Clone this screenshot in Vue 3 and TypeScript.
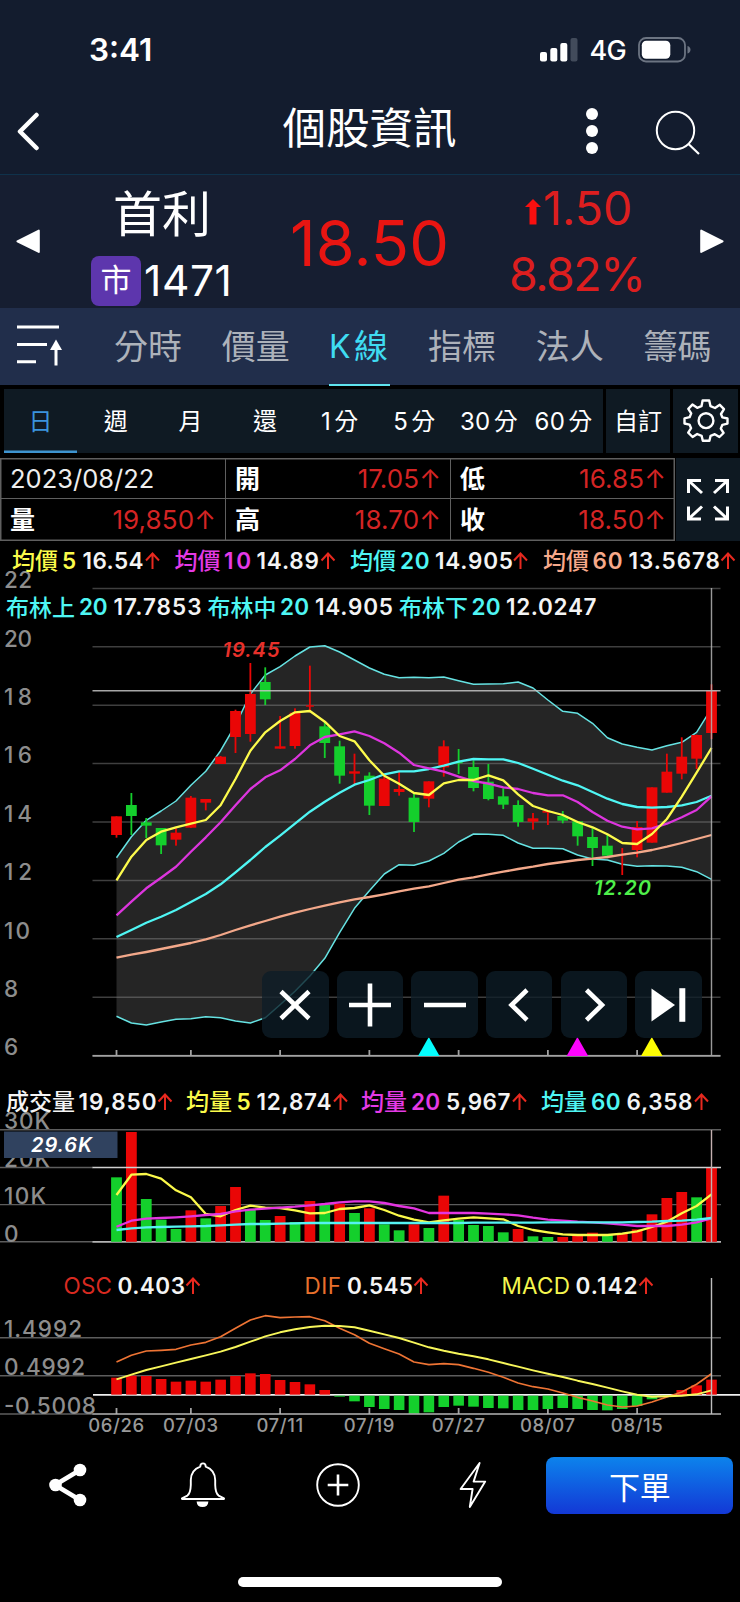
<script setup lang="ts">
type Tone = 'r' | 'g'
type Candle = [number, number, number, number, Tone]

interface Label {
  x: number
  y: number
  text: string
  w: number
  fill: string
  cjk?: boolean
}

const X0 = 116.5
const STEP = 14.875
const RED = '#ea0606'
const GREEN = '#14cf2c'
const cx = (i: number): number => X0 + i * STEP
const tone = (t: Tone): string => (t === 'r' ? RED : GREEN)

const line = (values: number[], top: number): string =>
  values.map((v, i) => `${cx(i).toFixed(1)},${(top + v / 3).toFixed(1)}`).join(' ')

const P = 630
const V = 1080
const M = 1260

// high, body top, body bottom, low (thirds of a pixel below P)
const candles: Candle[] = [
  [559, 559, 615, 623, 'r'], [489, 525, 558, 615, 'g'], [564, 577, 587, 624, 'g'], [594, 594, 646, 672, 'g'],
  [595, 608, 629, 647, 'r'], [498, 503, 593, 594, 'r'], [507, 507, 518, 541, 'r'], [378, 380, 402, 402, 'r'],
  [239, 243, 321, 369, 'r'], [99, 192, 312, 335, 'r'], [112, 156, 208, 225, 'g'], [258, 349, 356, 356, 'r'],
  [235, 248, 348, 356, 'r'], [107, 226, 230, 247, 'r'], [275, 289, 339, 384, 'g'], [332, 349, 437, 461, 'g'],
  [371, 424, 431, 464, 'r'], [427, 437, 527, 555, 'g'], [440, 446, 528, 528, 'r'], [426, 477, 486, 497, 'r'],
  [490, 503, 576, 606, 'g'], [454, 454, 506, 532, 'r'], [331, 349, 412, 440, 'r'], [357, 396, 400, 432, 'g'],
  [391, 411, 474, 484, 'g'], [402, 455, 507, 511, 'g'], [475, 499, 524, 537, 'g'], [511, 525, 576, 590, 'g'],
  [549, 565, 575, 599, 'r'], [541, 543, 548, 585, 'r'], [543, 558, 572, 580, 'g'], [573, 574, 619, 647, 'g'],
  [595, 621, 654, 708, 'g'], [615, 647, 677, 685, 'g'], [654, 672, 676, 735, 'r'], [573, 591, 660, 682, 'r'],
  [472, 472, 638, 638, 'r'], [371, 425, 488, 488, 'r'], [322, 380, 431, 448, 'r'], [314, 315, 386, 417, 'r'],
  [163, 182, 309, 327, 'r'],
]

const upper = [683, 620, 571, 543, 513, 466, 424, 362, 285, 192, 135, 110, 78, 51, 47, 66, 90, 114, 133, 143, 142, 143, 141, 152, 163, 162, 161, 156, 174, 210, 244, 250, 280, 323, 342, 352, 360, 347, 337, 307, 235]
const lower = [1159, 1179, 1185, 1176, 1168, 1166, 1160, 1163, 1173, 1179, 1163, 1124, 1084, 1038, 985, 908, 835, 782, 732, 704, 706, 693, 670, 636, 612, 613, 616, 639, 655, 655, 656, 675, 687, 690, 703, 709, 707, 708, 712, 725, 748]
const ma5 = [751, 680, 630, 605, 592, 581, 570, 526, 447, 362, 307, 273, 247, 243, 275, 318, 334, 391, 437, 461, 489, 495, 460, 450, 450, 436, 451, 493, 528, 543, 555, 576, 592, 613, 639, 642, 612, 567, 500, 428, 354]
const ma10 = [856, 815, 775, 743, 710, 665, 622, 577, 526, 477, 442, 421, 387, 346, 321, 313, 304, 318, 340, 368, 405, 415, 425, 440, 453, 461, 472, 477, 489, 496, 496, 516, 546, 572, 590, 598, 595, 581, 562, 540, 499]
const ma20 = [921, 900, 878, 860, 840, 816, 792, 763, 727, 690, 651, 617, 581, 545, 515, 488, 464, 450, 433, 424, 424, 417, 407, 395, 387, 388, 388, 399, 416, 434, 452, 466, 486, 506, 522, 531, 533, 531, 526, 516, 497]
const ma60 = [983, 974, 966, 957, 948, 939, 928, 915, 900, 886, 873, 860, 848, 837, 827, 817, 808, 801, 793, 784, 776, 769, 759, 749, 742, 733, 725, 717, 710, 702, 696, 690, 686, 681, 674, 668, 660, 650, 639, 627, 615]

const bandArea = `${line(upper, P)} ${line(lower, P).split(' ').reverse().join(' ')}`

const volTops = [292, 156, 357, 419, 447, 391, 415, 378, 321, 388, 420, 408, 426, 363, 375, 371, 399, 385, 433, 451, 433, 444, 347, 420, 435, 438, 457, 447, 469, 471, 471, 464, 458, 463, 462, 448, 403, 354, 336, 352, 263]
const volTones = [...'grgggrgrrggrgrgrgrggrgrggggrggrrrgrrrrrgr'] as Tone[]
const vma5 = [345, 284, 282, 296, 331, 352, 402, 409, 390, 377, 383, 384, 391, 400, 399, 387, 384, 376, 390, 407, 419, 427, 421, 416, 412, 415, 418, 438, 450, 457, 463, 465, 465, 465, 461, 454, 441, 425, 400, 378, 343]
const vma20 = [440, 422, 416, 414, 412, 409, 405, 402, 394, 389, 386, 383, 380, 376, 372, 367, 364, 364, 369, 378, 385, 399, 399, 399, 399, 401, 403, 406, 413, 419, 422, 425, 427, 430, 434, 438, 438, 438, 434, 427, 415]
const vma60 = [450, 445, 442, 441, 440, 439, 438, 436, 434, 432, 432, 431, 430, 429, 429, 429, 429, 429, 429, 429, 429, 429, 429, 429, 428, 428, 428, 428, 428, 427, 427, 427, 427, 427, 427, 426, 425, 423, 422, 419, 414]

const OSC_ZERO = 404
const osc = [353, 347, 348, 357, 365, 362, 365, 359, 348, 340, 342, 360, 366, 373, 390, 410, 424, 441, 447, 450, 461, 457, 441, 437, 440, 444, 445, 450, 450, 447, 444, 447, 450, 451, 447, 438, 418, 409, 390, 376, 359]
const dif = [306, 286, 273, 271, 268, 255, 247, 230, 205, 180, 167, 173, 171, 170, 182, 205, 224, 250, 266, 282, 306, 314, 311, 314, 325, 337, 352, 369, 380, 387, 399, 412, 423, 435, 441, 438, 426, 411, 396, 373, 341]
const macd = [358, 344, 330, 319, 308, 297, 286, 275, 261, 245, 229, 217, 208, 201, 197, 198, 202, 212, 223, 234, 248, 262, 272, 281, 289, 298, 309, 320, 331, 341, 351, 362, 372, 383, 394, 404, 410, 409, 407, 403, 391]

const ticks = [0, 5, 11, 17, 23, 29, 35]
const dates = ['06/26', '07/03', '07/11', '07/19', '07/27', '08/07', '08/15']
const priceAxis = [22, 20, 18, 16, 14, 12, 10, 8, 6].map((v) => ({ v, y: 1055.6 - (v - 6) * 29.2 }))

const W = '#f4f4f4'
const Y = '#fbfb4a'
const MG = '#e53ae6'
const CY = '#4ff6f4'
const OR = '#f7a98a'
const UP = '#e8291f'

const legends: Label[] = [
  { x: 12, y: 569.4, text: '均價', w: 46, fill: Y, cjk: true },
  { x: 62, y: 569, text: '5', w: 14, fill: Y },
  { x: 82.5, y: 569, text: '16.54', w: 61, fill: W },
  { x: 174.5, y: 569.4, text: '均價', w: 46, fill: MG, cjk: true },
  { x: 224, y: 569, text: '10', w: 27, fill: MG },
  { x: 256.5, y: 569, text: '14.89', w: 62.5, fill: W },
  { x: 350, y: 569.4, text: '均價', w: 46, fill: CY, cjk: true },
  { x: 400, y: 569, text: '20', w: 29.5, fill: CY },
  { x: 435, y: 569, text: '14.905', w: 78, fill: W },
  { x: 543, y: 569.4, text: '均價', w: 46, fill: OR, cjk: true },
  { x: 592.5, y: 569, text: '60', w: 30, fill: OR },
  { x: 628.5, y: 569, text: '13.5678', w: 91.5, fill: W },
  { x: 6, y: 615.9, text: '布林上', w: 69, fill: CY, cjk: true },
  { x: 79, y: 614.8, text: '20', w: 28.5, fill: CY },
  { x: 113.5, y: 614.8, text: '17.7853', w: 88, fill: W },
  { x: 207.5, y: 615.9, text: '布林中', w: 69, fill: CY, cjk: true },
  { x: 280, y: 614.8, text: '20', w: 29, fill: CY },
  { x: 315, y: 614.8, text: '14.905', w: 78, fill: W },
  { x: 399, y: 615.9, text: '布林下', w: 69, fill: CY, cjk: true },
  { x: 471.5, y: 614.8, text: '20', w: 29, fill: CY },
  { x: 506, y: 614.8, text: '12.0247', w: 90.5, fill: W },
  { x: 6, y: 1110, text: '成交量', w: 69, fill: W, cjk: true },
  { x: 78.5, y: 1109.5, text: '19,850', w: 78, fill: W },
  { x: 186, y: 1110, text: '均量', w: 46, fill: Y, cjk: true },
  { x: 236.5, y: 1109.5, text: '5', w: 14, fill: Y },
  { x: 256.5, y: 1109.5, text: '12,874', w: 75, fill: W },
  { x: 361, y: 1110, text: '均量', w: 46, fill: MG, cjk: true },
  { x: 411, y: 1109.5, text: '20', w: 29, fill: MG },
  { x: 446, y: 1109.5, text: '5,967', w: 64.5, fill: W },
  { x: 541, y: 1110, text: '均量', w: 46, fill: CY, cjk: true },
  { x: 591, y: 1109.5, text: '60', w: 29.5, fill: CY },
  { x: 626.5, y: 1109.5, text: '6,358', w: 66, fill: W },
  { x: 117.5, y: 1294, text: '0.403', w: 67.5, fill: W },
  { x: 347, y: 1294, text: '0.545', w: 66, fill: W },
  { x: 575.5, y: 1294, text: '0.142', w: 62, fill: W },
]

const macdNames: Label[] = [
  { x: 63.5, y: 1294, text: 'OSC', w: 48.5, fill: '#d82a20' },
  { x: 304.5, y: 1294, text: 'DIF', w: 36.5, fill: '#e8702c' },
  { x: 501.5, y: 1294, text: 'MACD', w: 68.5, fill: '#f4f64e' },
]

const arrows: [number, number][] = [
  [152.5, 561], [328, 561], [520.5, 561], [728, 561],
  [165, 1102], [340.5, 1102], [519.5, 1102], [701.5, 1102],
  [193, 1286], [421, 1286], [646, 1286],
]

const axis: Label[] = [
  { x: 4, y: 1129.4, text: '30K', w: 46, fill: '#8d8d8d' },
  { x: 4, y: 1167, text: '20K', w: 46, fill: '#8d8d8d' },
  { x: 4, y: 1204.3, text: '10K', w: 42, fill: '#8d8d8d' },
  { x: 4, y: 1241.6, text: '0', w: 15, fill: '#8d8d8d' },
  { x: 4, y: 1337, text: '1.4992', w: 78, fill: '#8d8d8d' },
  { x: 4, y: 1375.4, text: '0.4992', w: 81, fill: '#8d8d8d' },
  { x: 4, y: 1413.8, text: '-0.5008', w: 92, fill: '#8d8d8d' },
]

const tabs: [string, string][] = [['', '分時'], ['', '價量'], ['K', '線'], ['', '指標'], ['', '法人'], ['', '籌碼']]
const periods: [string, string][] = [['', '日'], ['', '週'], ['', '月'], ['', '還'], ['1', '分'], ['5', '分'], ['30', '分'], ['60', '分']]
const ohlc = [
  { label: '', value: '2023/08/22' },
  { label: '開', value: '17.05↑' },
  { label: '低', value: '16.85↑' },
  { label: '量', value: '19,850↑' },
  { label: '高', value: '18.70↑' },
  { label: '收', value: '18.50↑' },
]
</script>

<template>
  <div class="screen">
    <div class="status">
      <span class="clock">3:41</span>
      <div class="status-right">
        <svg class="signal" width="38" height="24" viewBox="0 0 38 24">
          <rect x="0" y="14" width="7" height="9.5" rx="2" fill="#fff" />
          <rect x="10.3" y="10" width="7" height="13.5" rx="2" fill="#fff" />
          <rect x="20.3" y="5" width="7" height="18.5" rx="2" fill="#fff" />
          <rect x="30.5" y="0" width="7" height="23.5" rx="2" fill="#424b5b" />
        </svg>
        <span class="net">4G</span>
        <svg width="53" height="26" viewBox="0 0 53 26">
          <rect x="1" y="1" width="46" height="23.5" rx="7" fill="none" stroke="#6c7482" stroke-width="1.8" />
          <rect x="3.8" y="3.8" width="28.5" height="18" rx="4.5" fill="#fff" />
          <path d="M49.5 9 Q52.5 10 52.5 12.8 Q52.5 15.6 49.5 16.6 Z" fill="#6c7482" />
        </svg>
      </div>
    </div>

    <header class="bar">
      <svg class="back" width="24" height="40" viewBox="0 0 24 40">
        <path d="M20.5 4 L4 20.5 L20.5 37" fill="none" stroke="#fff" stroke-width="4.5" stroke-linecap="round" stroke-linejoin="round" />
      </svg>
      <h1>個股資訊</h1>
      <svg class="dots" width="12" height="48" viewBox="0 0 12 48">
        <circle cx="6" cy="7" r="6" fill="#fff" />
        <circle cx="6" cy="24" r="6" fill="#fff" />
        <circle cx="6" cy="41" r="6" fill="#fff" />
      </svg>
      <svg class="search" width="46" height="46" viewBox="0 0 46 46">
        <circle cx="20.5" cy="20.5" r="18.7" fill="none" stroke="#fff" stroke-width="2" />
        <path d="M33.5 34 L44 44" stroke="#fff" stroke-width="2.2" />
      </svg>
    </header>

    <section class="quote">
      <svg class="nav" width="24" height="25" viewBox="0 0 24 25">
        <path d="M22.8 1.6 V22.9 L1.4 12.3 Z" fill="#fff" stroke="#fff" stroke-width="2" stroke-linejoin="round" />
      </svg>
      <div class="name">
        <div class="stock">首利</div>
        <div class="code"><span class="badge">市</span><span>1471</span></div>
      </div>
      <div class="price">18.50</div>
      <div class="change">
        <div class="delta">
          <svg width="18" height="26" viewBox="0 0 18 26"><path d="M9 0 L17 8 H12.5 V25.5 H5.5 V8 H1 Z" fill="#fa0f0f" /></svg>
          <span>1.50</span>
        </div>
        <div class="pct">8.82%</div>
      </div>
      <svg class="nav" width="24" height="25" viewBox="0 0 24 25">
        <path d="M1.2 1.6 V22.9 L22.6 12.3 Z" fill="#fff" stroke="#fff" stroke-width="2" stroke-linejoin="round" />
      </svg>
    </section>

    <nav class="tabs">
      <svg class="sort" width="46" height="42" viewBox="0 0 46 42">
        <path d="M0 2 H42 M0 19.5 H30 M0 36.7 H19" stroke="#fff" stroke-width="3" />
        <path d="M39 40.5 V20" stroke="#fff" stroke-width="3" />
        <path d="M39 14.5 L45 25 H33 Z" fill="#fff" />
      </svg>
      <div v-for="t in tabs" :key="t[1]" class="tab" :class="{ active: t[0] }"><span v-if="t[0]" class="latin">{{ t[0] }}</span>{{ t[1] }}</div>
    </nav>

    <div class="periods">
      <div class="period-list">
        <div v-for="(p, i) in periods" :key="i" class="period" :class="{ active: i === 0 }">
          <span v-if="p[0]" class="num">{{ p[0] }}</span><span>{{ p[1] }}</span>
        </div>
      </div>
      <div class="custom">自訂</div>
      <div class="gear">
        <svg width="46" height="43" viewBox="0 0 46 43">
          <path
            d="M19.6 1.5 H26.2 L27.5 7.2 L32 9 L36.8 5.8 L41 10.2 L38 15 L39.3 18.3 L44.5 19.5 V24.6 L39.4 25.8 L37.8 29.6 L40.6 34 L36.4 38 L31.8 35.2 L27.6 36.8 L26.4 41.7 H19.8 L18.6 36.8 L14.2 35 L9.6 38 L5.2 33.7 L8.1 29.2 L6.5 25.6 L1.5 24.5 V19.4 L6.6 18.2 L8.2 14.4 L5.3 9.8 L9.4 5.6 L14.2 8.8 L18.5 7.2 Z"
            fill="none" stroke="#fff" stroke-width="2.4" stroke-linejoin="round"
          />
          <circle cx="23" cy="21.7" r="7.4" fill="none" stroke="#fff" stroke-width="2.4" />
        </svg>
      </div>
    </div>

    <div class="ohlc">
      <div class="cells">
        <div v-for="c in ohlc" :key="c.value" class="cell" :class="{ date: !c.label }">
          <span v-if="c.label" class="key">{{ c.label }}</span>
          <span class="val">{{ c.value }}</span>
        </div>
      </div>
      <div class="expand">
        <svg width="42" height="58" viewBox="0 0 42 58" fill="none" stroke="#fff" stroke-width="3">
          <path d="M1.5 22 V9.5 H14 M2 10 L15 22" />
          <path d="M28 9.5 H40.5 V22 M40 10 L27 22" />
          <path d="M1.5 35.5 V48 H14 M2 47.5 L15 35.5" />
          <path d="M28 48 H40.5 V35.5 M40 47.5 L27 35.5" />
        </svg>
      </div>
    </div>

    <div class="chart">
      <svg width="740" height="899" viewBox="0 541 740 899">
        <polygon :points="bandArea" fill="#252525" />
        <g stroke="#8c8c8c" stroke-opacity="0.45" stroke-width="1.5">
          <line v-for="a in priceAxis" :key="a.v" x1="92.5" :x2="720.5" :y1="a.y" :y2="a.y" />
        </g>
        <polyline :points="line(upper, P)" class="thin" stroke="#66e3e3" />
        <polyline :points="line(lower, P)" class="thin" stroke="#66e3e3" />

        <g v-for="(c, i) in candles" :key="'c' + i" :fill="tone(c[4])">
          <rect :x="cx(i) - 0.9" :y="P + c[0] / 3" width="1.8" :height="(c[3] - c[0]) / 3" />
          <rect :x="cx(i) - (c[2] - c[1] < 5 ? 4 : 5.4)" :y="P + c[1] / 3" :width="c[2] - c[1] < 5 ? 8 : 10.8" :height="(c[2] - c[1]) / 3" />
        </g>
        <line x1="92.5" x2="720.5" y1="690.7" y2="690.7" stroke="#c4c4c4" stroke-opacity="0.85" stroke-width="1.4" />
        <polyline :points="line(ma60, P)" class="curve" stroke="#f3a88a" />
        <polyline :points="line(ma20, P)" class="curve" stroke="#4ff6f4" />
        <polyline :points="line(ma10, P)" class="curve" stroke="#dd35de" />
        <polyline :points="line(ma5, P)" class="curve" stroke="#fdfb4c" />

        <g class="axis">
          <text v-for="a in priceAxis" :key="a.v" x="4" :y="a.y - 0.2" :textLength="a.v === 10 ? 26 : a.v > 9 ? 28 : 14.5">{{ a.v }}</text>
        </g>
        <text class="mark" x="222.5" y="656.7" textLength="57" fill="#e8302a">19.45</text>
        <text class="mark" x="594" y="895.3" textLength="57" fill="#4ff04a">12.20</text>

        <line x1="92.5" x2="720.5" y1="1055.8" y2="1055.8" stroke="#a2a2a2" stroke-width="1.8" />
        <g stroke="#a2a2a2" stroke-width="1.8">
          <line v-for="t in ticks" :key="t" :x1="cx(t)" :x2="cx(t)" y1="1050" y2="1056" />
          <line v-for="t in ticks" :key="'m' + t" :x1="cx(t)" :x2="cx(t)" y1="1408" y2="1414" />
        </g>
        <line x1="711.5" x2="711.5" y1="588" y2="1055" stroke="#b4b4b4" stroke-opacity="0.85" stroke-width="1.4" />
        <path d="M418 1056 L428.8 1037 L439.6 1056 Z" fill="#04fdfd" />
        <path d="M566.6 1056 L577.4 1037 L588.2 1056 Z" fill="#fd04fd" />
        <path d="M641 1056 L651.8 1037 L662.6 1056 Z" fill="#fdfd04" />

        <g stroke="#7c7c7c" stroke-opacity="0.75" stroke-width="1.4">
          <path d="M0 1129.7 H721 M0 1167.5 H93 M0 1204.6 H721 M0 1241.8 H93" />
          <path d="M0 1337.7 H721 M0 1375.8 H721 M0 1414 H93" />
        </g>
        <path d="M92.5 1241.8 H721" stroke="#b4b4b4" stroke-width="1.8" />
        <rect
          v-for="(v, i) in volTops" :key="'v' + i" :x="cx(i) - 5.4" :y="V + v / 3" width="10.8"
          :height="1241.8 - V - v / 3" :fill="tone(volTones[i])"
        />
        <path d="M92.5 1167.6 H721" stroke="#cfcfcf" stroke-width="1.5" />
        <polyline :points="line(vma5, V)" class="curve" stroke="#fbf94a" />
        <polyline :points="line(vma20, V)" class="curve" stroke="#e335e0" />
        <polyline :points="line(vma60, V)" class="curve" stroke="#55f2f2" />
        <path d="M711.5 1130 V1242" stroke="#c4b0b0" stroke-width="1.4" />

        <path d="M93 1394.8 H740" stroke="#f0f0f0" stroke-width="1.8" />
        <rect
          v-for="(v, i) in osc" :key="'o' + i" :x="cx(i) - 5.3" :y="M + Math.min(v, OSC_ZERO + 3) / 3" width="10.6"
          :height="Math.max(Math.abs(v - OSC_ZERO - (v > OSC_ZERO ? 3 : 0)) / 3, 1)" :fill="v < OSC_ZERO ? RED : GREEN"
        />
        <path d="M92.5 1414 H721" stroke="#b4b4b4" stroke-width="1.6" />
        <polyline :points="line(dif, M)" class="thin dif" stroke="#ee7434" />
        <polyline :points="line(macd, M)" class="thin wide" stroke="#f7f65a" />
        <path d="M711.5 1278 V1414" stroke="#bdbdbd" stroke-width="1.4" />

        <g class="axis">
          <text v-for="a in axis" :key="a.text" :x="a.x" :y="a.y" :textLength="a.w">{{ a.text }}</text>
        </g>
        <g class="dates">
          <text v-for="(d, i) in dates" :key="d" :x="cx(ticks[i])" y="1432">{{ d }}</text>
        </g>
        <rect x="4" y="1131.5" width="113.5" height="26.5" fill="#30425f" />
        <text class="mark tag" x="31" y="1151.6" textLength="61" fill="#fff">29.6K</text>

        <g class="legend">
          <text v-for="(l, i) in legends" :key="i" :x="l.x" :y="l.y" :textLength="l.w" :fill="l.fill" :class="{ cjk: l.cjk }">{{ l.text }}</text>
        </g>
        <g class="names">
          <text v-for="l in macdNames" :key="l.text" :x="l.x" :y="l.y" :textLength="l.w" :fill="l.fill">{{ l.text }}</text>
        </g>
        <path
          v-for="(a, i) in arrows" :key="'a' + i" :d="`M${a[0]} ${a[1] + 8} v-15.5 m-6.5 7 l6.5 -7 l6.5 7`"
          fill="none" :stroke="UP" stroke-width="2"
        />
      </svg>

      <div class="tools">
        <button><svg width="40" height="44" viewBox="-20 -22 40 44"><path d="M-14 -13.5 L14 13.5 M14 -13.5 L-14 13.5" /></svg></button>
        <button><svg width="44" height="44" viewBox="-22 -22 44 44"><path d="M-21 0 H21 M0 -21.5 V21.5" /></svg></button>
        <button><svg width="44" height="44" viewBox="-22 -22 44 44"><path d="M-21 0 H21" /></svg></button>
        <button><svg width="44" height="44" viewBox="-22 -22 44 44"><path d="M8 -15 L-7.5 0 L8 15" /></svg></button>
        <button><svg width="44" height="44" viewBox="-22 -22 44 44"><path d="M-7.5 -15 L8 0 L-7.5 15" /></svg></button>
        <button><svg width="44" height="44" viewBox="-22 -22 44 44"><path class="solid" d="M-16.5 -16.5 L7 0 L-16.5 16.5 Z" /><path class="stop" d="M14.3 -16.8 V16.8" /></svg></button>
      </div>
    </div>

    <footer class="actions">
      <div class="action">
        <svg width="40" height="44" viewBox="0 0 40 44">
          <path d="M32 7 L7 22 L32 37" fill="none" stroke="#fff" stroke-width="4.6" />
          <circle cx="32" cy="7" r="6.3" fill="#fff" /><circle cx="7.5" cy="22" r="6.3" fill="#fff" /><circle cx="32" cy="37" r="6.3" fill="#fff" />
        </svg>
      </div>
      <div class="action">
        <svg width="46" height="46" viewBox="0 0 46 46">
          <path d="M20.2 4.6 Q20.4 1.4 23 1.4 Q25.6 1.4 25.8 4.6 Q35 8 35.2 18 V23 Q35.4 31 38.6 33.6 L43.8 36.2 Q44.5 37 43.5 37 H2.5 Q1.5 37 2.2 36.2 L7.4 33.6 Q10.6 31 10.8 23 V18 Q11 8 20.2 4.6 Z" fill="none" stroke="#fff" stroke-width="1.9" />
          <path d="M16.6 39.5 H28.4 Q28 45 22.5 45 Q17 45 16.6 39.5 Z" fill="#fff" />
        </svg>
      </div>
      <div class="action">
        <svg width="46" height="46" viewBox="0 0 46 46">
          <circle cx="23" cy="23" r="20.8" fill="none" stroke="#fff" stroke-width="1.9" />
          <path d="M23 12.5 V33.5 M12.7 23 H33.3" stroke="#fff" stroke-width="2.6" />
        </svg>
      </div>
      <div class="action">
        <svg width="30" height="48" viewBox="0 0 30 48">
          <path d="M21.6 2 L2.6 28 H14.6 L11.8 46 L27.2 20.6 H15.6 Z" fill="none" stroke="#fff" stroke-width="1.9" stroke-linejoin="round" />
        </svg>
      </div>
      <button class="order">下單</button>
    </footer>
    <div class="home"></div>
  </div>
</template>

<style>
body {
  background: #000;
}
</style>

<style scoped>
.screen {
  width: 740px;
  height: 1602px;
  overflow: hidden;
  background: #000;
  color: #fff;
  font-family: Inter, "Noto Sans CJK TC", sans-serif;
  display: flex;
  flex-direction: column;
}
.screen > * { flex: none; }
svg { display: block; flex: none; }

.status {
  height: 98px;
  background: #131c2e;
  display: flex;
  justify-content: space-between;
  align-items: flex-start;
  padding: 37px 49.5px 0 89px;
  box-sizing: border-box;
}
.clock { font-size: 31.5px; font-weight: 600; line-height: 26px; letter-spacing: 0; }
.status-right { display: flex; align-items: flex-start; }
.signal { margin-top: 1px; }
.net { font-size: 27px; font-weight: 500; line-height: 27px; width: 35px; margin: 0 13px 0 11.5px; letter-spacing: -0.8px; }

.bar {
  height: 77px;
  box-sizing: border-box;
  border-bottom: 1px solid #0f324b;
  background: #131c2e;
  display: flex;
  align-items: center;
  padding-left: 16px;
}
.back { margin-top: -10px; }
h1 { margin: -17px 0 0 242.5px; width: 176px; font-size: 43.5px; line-height: 60px; font-weight: 400; white-space: nowrap; }
.dots { margin: -10px 0 0 127.5px; }
.search { margin: -7px 0 0 56.5px; }

.quote {
  height: 133px;
  background: #161e31;
  display: flex;
  align-items: center;
}
.nav { margin: 0 0 0 16px; }
.name { width: 152px; margin-left: 51px; }
.stock { font-size: 49px; line-height: 66px; font-weight: 400; padding-left: 22px; }
.code { display: flex; align-items: center; margin-top: 8px; font-size: 42.5px; line-height: 50px; letter-spacing: 0.6px; gap: 3px; margin-bottom: -5px; }
.badge { width: 50px; height: 50px; border-radius: 8px; background: #5d36ad; font-size: 31px; font-weight: 400; line-height: 48px; text-align: center; letter-spacing: 0; }
.price { width: 170px; margin-left: 47px; font-size: 63px; font-weight: 400; color: #e81512; letter-spacing: 0.1px; white-space: nowrap; padding-top: 2px; }
.change { width: 150px; margin-left: 49px; color: #dc1e1f; font-size: 46.5px; font-weight: 400; line-height: 64px; white-space: nowrap; }
.delta { display: flex; align-items: center; padding-left: 15px; margin-top: -1px; gap: 1px; }
.delta svg { margin-top: 8px; }
.pct { margin-top: 2px; letter-spacing: -1.5px; }
.change + .nav { margin-left: 41px; }

.tabs {
  height: 77px;
  background: #212e4b;
  display: flex;
}
.sort { margin: 17px 51px 0 17px; }
.tab { margin-right: 39.8px; color: #adb2ba; font-size: 34px; font-weight: 400; line-height: 77px; height: 77px; white-space: nowrap; }
.tab.active { color: #3fdcf2; position: relative; width: 59px; display: flex; gap: 3.5px; margin-left: -0.5px; }
.tab.active .latin { font-size: 32px; font-weight: 400; }
.tab.active::after { content: ""; position: absolute; left: 0; bottom: -1px; width: 61px; height: 2.5px; background: #5fe3ee; }

.periods { display: flex; height: 64px; margin: 4px 0 0 4px; gap: 3px; font-size: 24px; line-height: 66px; font-weight: 400; }
.periods > div { background: #0f1a23; }
.period-list { display: flex; width: 599px; height: 64px; }
.period { width: 74.6px; height: 64px; display: flex; justify-content: center; gap: 3px; }
.period .num { font-size: 24px; letter-spacing: 0.4px; }
.period.active { color: #3b93dc; box-shadow: inset 0 -2.5px 0 #3e94d0; width: 73px; margin-right: 1.5px; }
.custom { width: 64px; text-align: center; }
.gear { width: 65px; display: flex; align-items: center; justify-content: center; padding-bottom: 2px; height: 62px; }

.ohlc { display: flex; height: 83px; margin-top: 5px; gap: 1px; }
.cells { display: grid; grid-template-columns: 225px 225px 225px; grid-template-rows: 41px 42px; width: 675px; position: relative; box-shadow: inset 0 0 0 1.5px #5f5f5f; }
.cell { display: flex; justify-content: space-between; padding: 0 9px 0 9px; line-height: 42px; border-left: 1.5px solid #5f5f5f; border-bottom: 1.5px solid #5f5f5f; box-sizing: border-box; white-space: nowrap; }
.cell .key { font-size: 25px; font-weight: 700; }
.cell .val { font-size: 26px; color: #d42424; font-weight: 400; letter-spacing: 0.1px; }
.cell.date .val { color: #eee; font-weight: 400; font-size: 25.5px; letter-spacing: 0; }
.expand { width: 64px; background: #0e1922; display: flex; align-items: center; justify-content: center; }

.chart { position: relative; height: 899px; }
.thin { fill: none; stroke-width: 1.5; stroke-linejoin: round; }
.thin.dif { stroke-width: 1.7; }
.thin.wide { stroke-width: 1.9; }
.curve { fill: none; stroke-width: 2.3; stroke-linejoin: round; }
.axis text { font-size: 22.5px; font-weight: 500; fill: #8d8d8d; }
.dates text { font-size: 18.5px; font-weight: 500; fill: #999; text-anchor: middle; letter-spacing: 0.6px; }
.mark { font-size: 20px; font-style: italic; font-weight: 600; }
.legend text { font-size: 22.5px; font-weight: 600; }
.legend text.cjk { font-family: "Noto Sans CJK TC", sans-serif; font-size: 23px; font-weight: 500; }
.names text { font-size: 22.5px; font-weight: 400; }

.tools { position: absolute; left: 262.2px; top: 430px; display: flex; gap: 8.1px; }
.tools button { width: 66.5px; height: 67px; padding: 0; border: 0; border-radius: 9px; background: rgba(13, 28, 39, 0.78); display: flex; align-items: center; justify-content: center; }
.tools path { fill: none; stroke: #fff; stroke-width: 4.6; }
.tools path.solid { fill: #fff; stroke: none; }
.tools path.stop { stroke-width: 6; }

.actions { height: 73px; display: flex; align-items: center; padding-top: 17px; box-sizing: border-box; }
.action { width: 135.1px; display: flex; justify-content: center; }
.order { width: 187px; height: 57px; margin: 0 0 0 6px; border: 0; padding: 0; border-radius: 8px; background: linear-gradient(#0c83ec, #1338d6); color: #fff; font-family: "Noto Sans CJK TC", sans-serif; font-size: 31px; line-height: 53px; }
.home { width: 264px; height: 10px; border-radius: 5px; background: #fff; margin: 64px 0 0 238px; }
</style>
